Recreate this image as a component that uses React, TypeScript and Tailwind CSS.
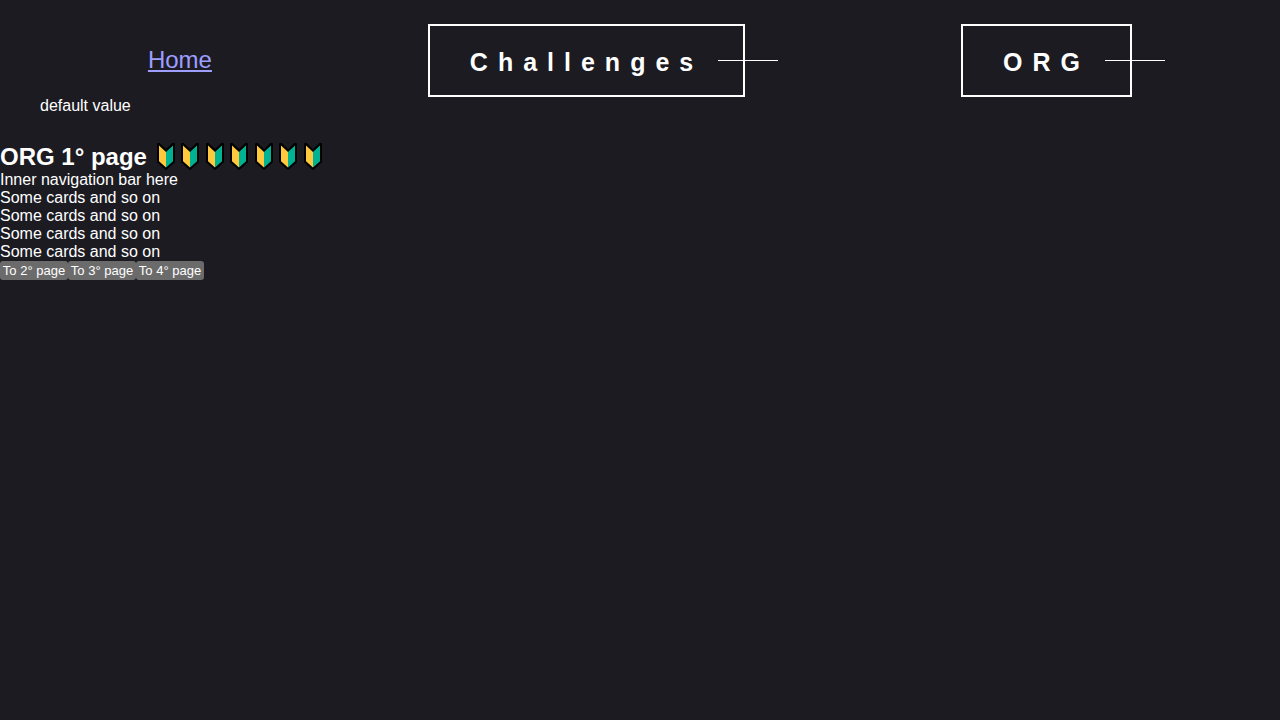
const cards = [1, 2, 3, 4];
const marks = [1, 2, 3, 4, 5, 6, 7];
const pages = [2, 3, 4];

function BeginnerMark() {
  return (
    <svg viewBox="-1 1 20 28" className="block h-7 w-5" aria-hidden="true">
      <path
        d="M1.9 1.9 L3.4 1.9 L10 8.1 L16.6 1.9 L18.1 1.9 L18.1 20 L10 27.2 L1.9 20 Z"
        fill="#000"
        stroke="#000"
        strokeWidth="1.6"
        strokeLinejoin="round"
      />
      <path d="M3 3.5 L10 10 L10 25.4 L3 19.2 Z" fill="#ffc83d" />
      <path d="M17 3.5 L10 10 L10 25.4 L17 19.2 Z" fill="#00b294" />
    </svg>
  );
}

function MenuButton({ label }: { label: string }) {
  return (
    <button
      type="button"
      className="relative border-2 border-white px-10 pt-[22px] pb-[18px] text-[25px] leading-[29px] font-bold tracking-[10px]"
    >
      {label}
      <span className="absolute top-[34px] right-[-35px] h-px w-15 bg-white" />
    </button>
  );
}

export default function App() {
  return (
    <div className="min-h-screen overflow-x-hidden bg-[#1c1b22] font-['Liberation_Sans',Arial,sans-serif] text-base leading-[18px] text-white">
      <nav className="px-10 pt-6">
        <ul className="flex items-center justify-around">
          <li className="pb-0.5">
            <a href="#home" className="text-2xl leading-7 text-[#9e9eff] underline">
              Home
            </a>
          </li>
          <li className="flex">
            <MenuButton label="Challenges" />
          </li>
          <li className="flex">
            <MenuButton label="ORG" />
          </li>
        </ul>
        <p>default value</p>
      </nav>
      <main className="pt-7">
        <h1 className="flex h-7 items-center gap-2 text-2xl leading-7 font-bold">
          ORG 1° page
          <span className="grid w-[171px] grid-cols-7">
            {marks.map((n) => (
              <BeginnerMark key={n} />
            ))}
          </span>
        </h1>
        <p>Inner navigation bar here</p>
        {cards.map((n) => (
          <p key={n}>Some cards and so on</p>
        ))}
        <div className="flex">
          {pages.map((n) => (
            <button
              key={n}
              type="button"
              className="min-w-17 rounded-[3px] bg-[#6b6b6b] px-0.5 py-0.5 text-[13px] leading-[15px]"
            >
              To {n}° page
            </button>
          ))}
        </div>
      </main>
    </div>
  );
}
